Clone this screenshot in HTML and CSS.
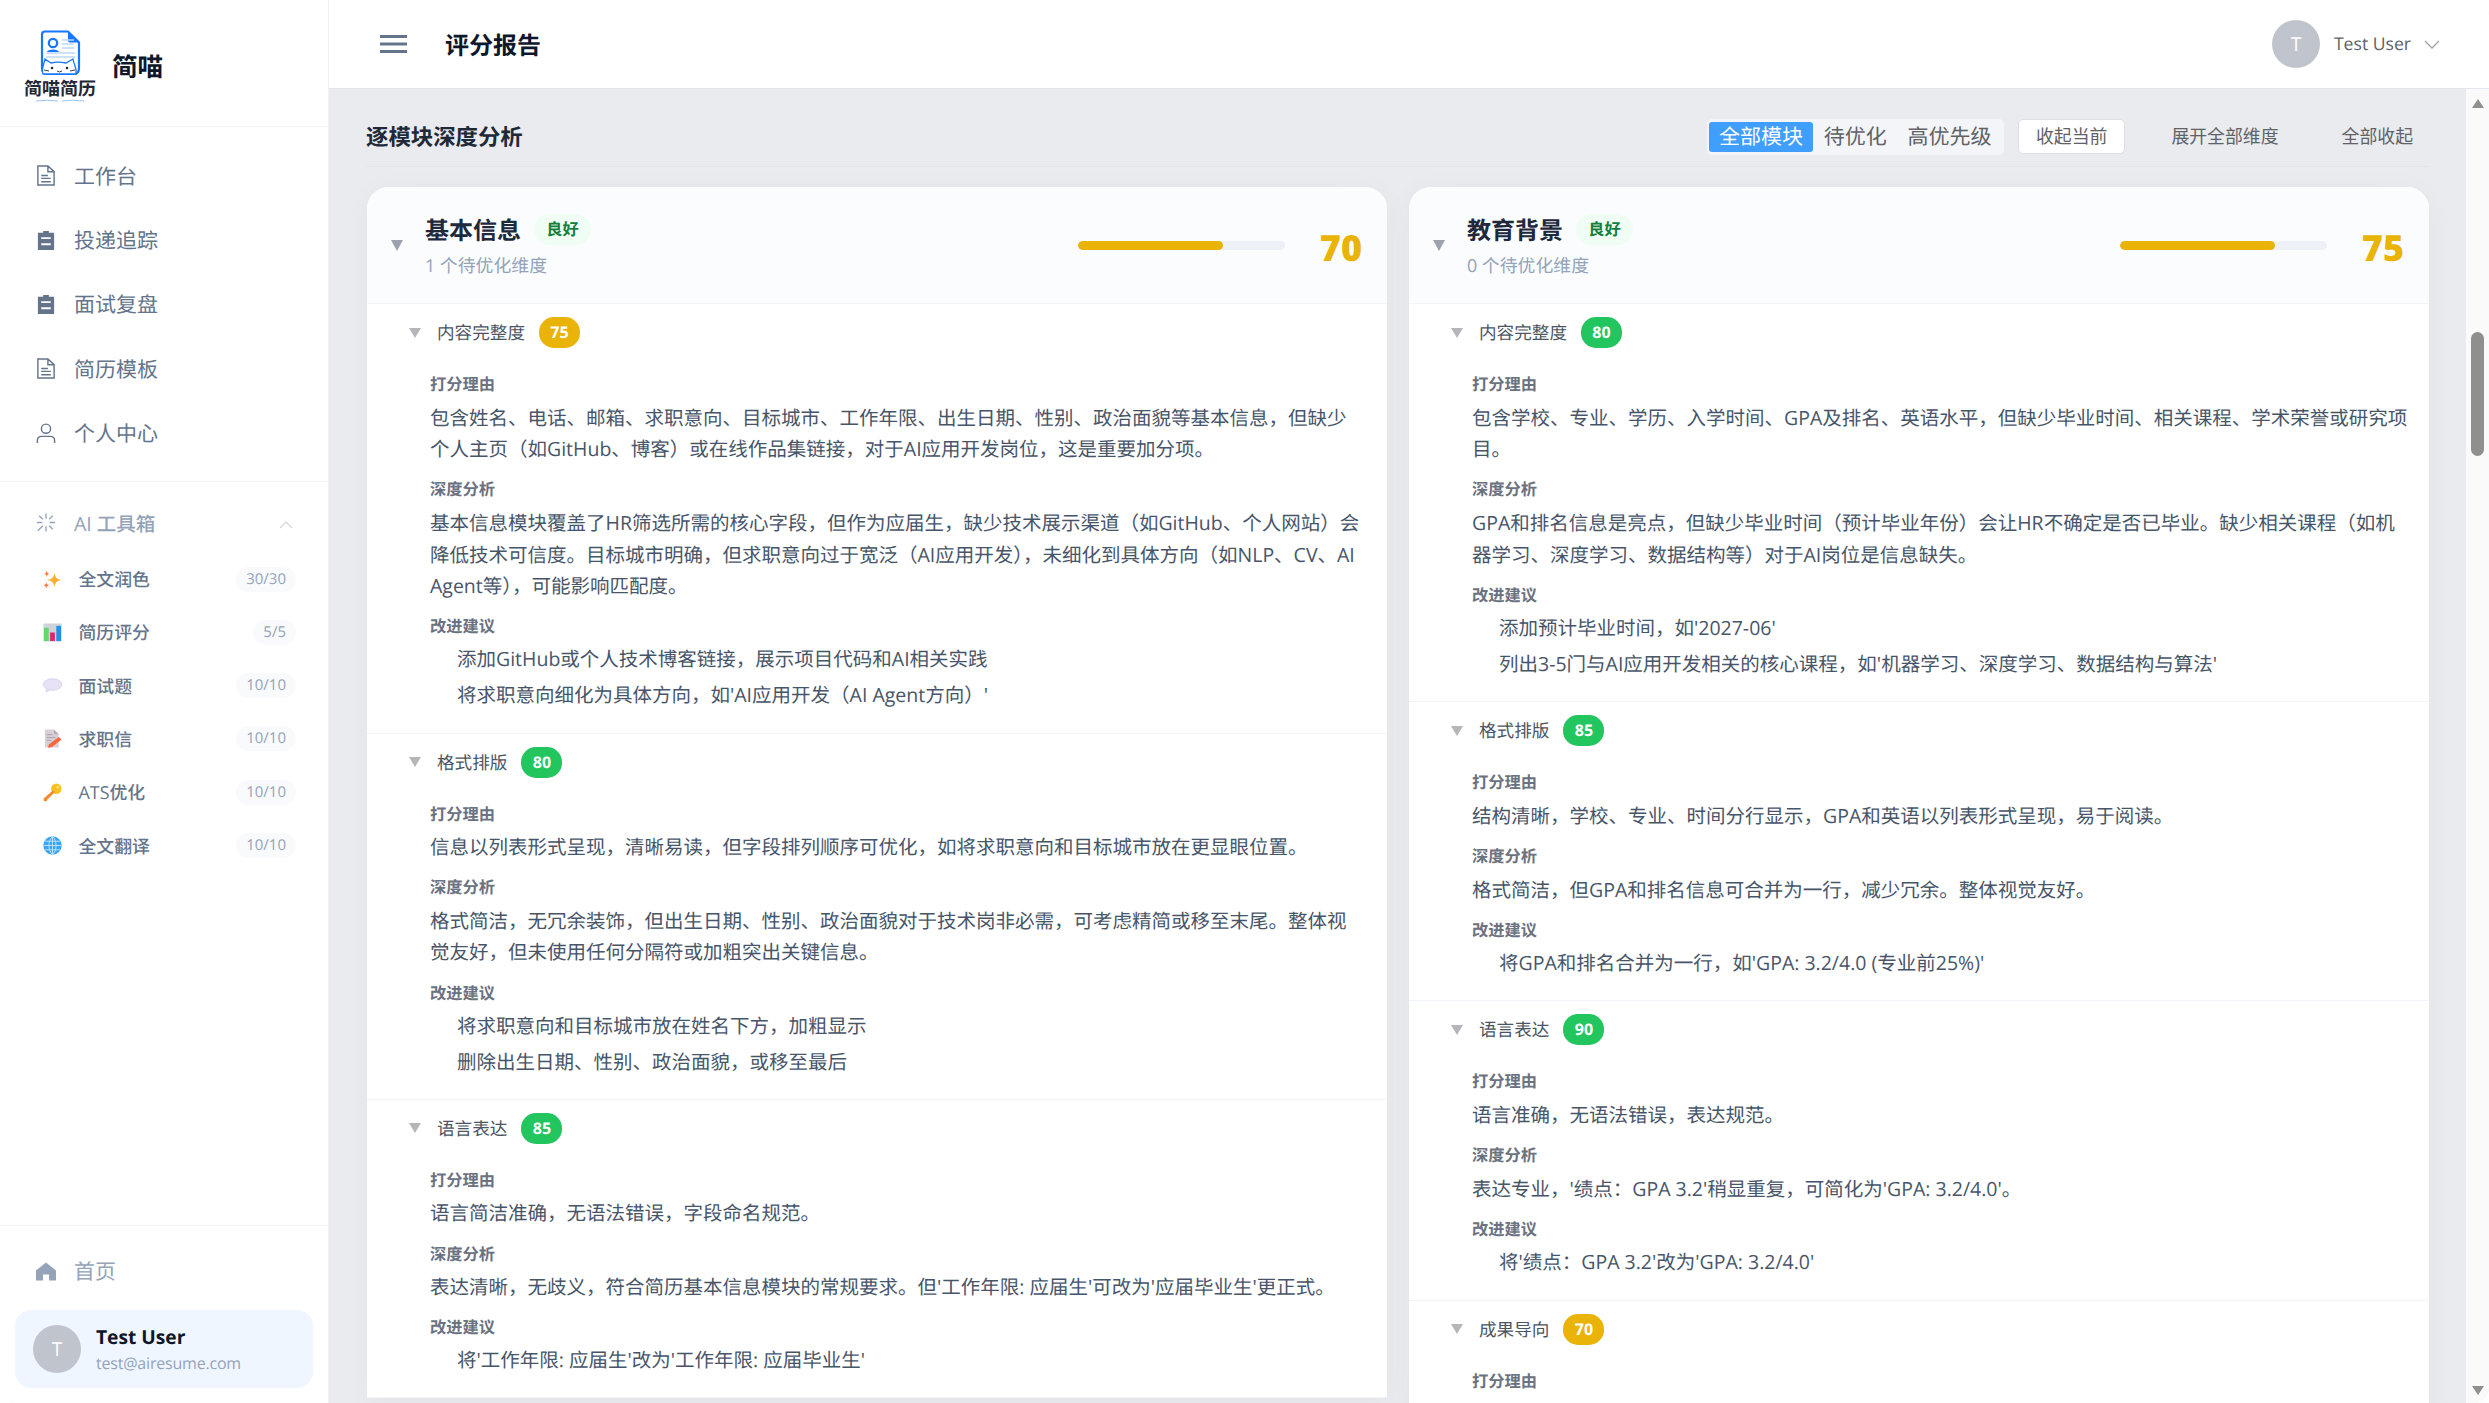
FILE: index.html
```html
<!DOCTYPE html>
<html lang="zh-CN">
<head>
    <meta charset="UTF-8">
    <title>评分报告 - 简喵</title>
    <link rel="stylesheet" href="styles.css">
</head>
<body>
<div class="app">

    <!-- Sidebar -->
    <aside class="sidebar">
        <div class="brand">
            <svg class="brand-logo" viewBox="0 0 72 72">
                <path d="M21 1.500H44L55 12.500V38C55 42 53 44 50 44H23C20 44 18 42 18 38V4.500C18 2.500 19 1.500 21 1.500Z" fill="#fff" stroke="#1677ff" stroke-width="2.200"/>
                <path d="M44 1.500L55 12.500H46C44.800 12.500 44 11.700 44 10.500Z" fill="#1677ff"/>
                <circle cx="29" cy="13" r="4.200" fill="none" stroke="#1677ff" stroke-width="2.200"/>
                <path d="M23 22C23.500 18.500 34.500 18.500 35 22" fill="#1677ff"/>
                <path d="M38 10H50M38 14H50M38 18H50M22 23H51M22 27H51" stroke="#bcd8fb" stroke-width="1.500"/>
                <path d="M19 44C17 38 20 35 21 29L27 33C31 32 37 32 42 33L49 29C50 35 53 38 52 44Z" fill="#fff" stroke="#1677ff" stroke-width="1.300"/>
                <circle cx="28" cy="38" r="1.300" fill="#1f2937"/>
                <circle cx="43" cy="38" r="1.300" fill="#1f2937"/>
                <path d="M33 41Q35.500 43 38 41M20 40L25 41M46 41L51 40" stroke="#1f2937" stroke-width="0.900" fill="none"/>
                <text class="brand-logo-text" x="36" y="65" text-anchor="middle">简喵简历</text>
                <path d="M12 71Q24 69.500 34 71M38 71Q48 69.500 60 71" stroke="#7db4f5" stroke-width="0.800" fill="none"/>
            </svg>
            <span class="brand-name">简喵</span>
        </div>

        <nav class="nav">
            <a class="nav-item">
                <svg class="nav-icon" viewBox="0 0 20 22"><path d="M1.500 1H12L18.500 7V21H1.500ZM12 1V7H18.500M5 11H12M5 14H15M5 17.500H15" fill="none" stroke="#64748b" stroke-width="1.500"/></svg>
                工作台
            </a>
            <a class="nav-item">
                <svg class="nav-icon" viewBox="0 0 20 22"><path d="M7 1H13V3H18.500V21H1.500V3H7Z" fill="#64748b"/><path d="M5 7.500H15V9.500H5ZM5 14H15V16H5Z" fill="#fff"/></svg>
                投递追踪
            </a>
            <a class="nav-item">
                <svg class="nav-icon" viewBox="0 0 20 22"><path d="M7 1H13V3H18.500V21H1.500V3H7Z" fill="#64748b"/><path d="M5 7.500H15V9.500H5ZM5 14H15V16H5Z" fill="#fff"/></svg>
                面试复盘
            </a>
            <a class="nav-item">
                <svg class="nav-icon" viewBox="0 0 20 22"><path d="M1.500 1H12L18.500 7V21H1.500ZM12 1V7H18.500M5 11H12M5 14H15M5 17.500H15" fill="none" stroke="#64748b" stroke-width="1.500"/></svg>
                简历模板
            </a>
            <a class="nav-item">
                <svg class="nav-icon" viewBox="0 0 20 22"><circle cx="10" cy="6" r="4.800" fill="none" stroke="#64748b" stroke-width="1.500"/><path d="M1 21V18C1 15.500 3 14 5.500 14H14.500C17 14 19 15.500 19 18V21" fill="none" stroke="#64748b" stroke-width="1.500"/></svg>
                个人中心
            </a>
        </nav>

        <div class="tools">
            <div class="tools-head">
                <svg class="nav-icon" viewBox="0 0 22 22"><path d="M11 1V7M11 15V21M1 11H7M15 11H21M3.500 3.500L7.500 7.500M14.500 14.500L18.500 18.500M18.500 3.500L14.500 7.500M7.500 14.500L2 20" stroke="#94a3b8" stroke-width="1.500" fill="none"/></svg>
                <span>AI 工具箱</span>
                <svg class="tools-chevron" viewBox="0 0 14 8"><path d="M1 7L7 1L13 7" fill="none" stroke="#d1d5db" stroke-width="1.200"/></svg>
            </div>

            <a class="tool">
                <svg class="tool-icon" viewBox="0 0 20 20"><path d="M12 3C13 8 14 9.500 19.500 10.500C14 11.500 13 13 12 18.500C11 13 10 11.500 4.500 10.500C10 9.500 11 8 12 3Z" fill="#fbb034"/><path d="M4 0.500C4.500 3 5 3.500 7 4C5 4.500 4.500 5 4 7.500C3.500 5 3 4.500 1 4C3 3.500 3.500 3 4 0.500ZM3.500 13C4 15 4.500 15.500 6.500 16C4.500 16.500 4 17 3.500 19.500C3 17 2.500 16.500 0.500 16C2.500 15.500 3 15 3.500 13Z" fill="#f9793c"/></svg>
                <span class="tool-name">全文润色</span><span class="tool-count">30/30</span>
            </a>
            <a class="tool">
                <svg class="tool-icon" viewBox="0 0 20 20"><rect x="0.500" y="0.500" width="19" height="19" rx="1" fill="#cfd2d8"/><rect x="1" y="5" width="5" height="14" fill="#62d96b"/><rect x="7.500" y="10" width="5" height="9" fill="#e0246f"/><rect x="14" y="3" width="5" height="16" fill="#2491e8"/></svg>
                <span class="tool-name">简历评分</span><span class="tool-count">5/5</span>
            </a>
            <a class="tool">
                <svg class="tool-icon" viewBox="0 0 20 20"><path d="M10 3C15.500 3 19.500 5.500 19.500 9C19.500 12.500 15.500 15 10 15C9 15 8 14.900 7 14.700C6 15.700 4.500 16.500 3 16.500C3.800 15.700 4.200 14.700 4.200 13.500C2 12.500 0.500 11 0.500 9C0.500 5.500 4.500 3 10 3Z" fill="#e8e2f6" stroke="#cfc6ea" stroke-width="0.800"/></svg>
                <span class="tool-name">面试题</span><span class="tool-count">10/10</span>
            </a>
            <a class="tool">
                <svg class="tool-icon" viewBox="0 0 20 20"><path d="M2 0.500H11.500L16.500 5.500V19.500H2Z" fill="#d8d0d8"/><path d="M11.500 0.500L16.500 5.500H11.500Z" fill="#b8adb8"/><path d="M4 6H10M4 9H13M4 12H9" stroke="#a99ea9" stroke-width="1"/><path d="M16.500 8.500L19.500 11L9.500 19L5 19.800L6.500 16Z" fill="#f4673a"/></svg>
                <span class="tool-name">求职信</span><span class="tool-count">10/10</span>
            </a>
            <a class="tool">
                <svg class="tool-icon" viewBox="0 0 20 20"><circle cx="14" cy="6" r="5.500" fill="#fbbf24"/><path d="M10.500 7.500L12.500 9.500L4.500 17.500L3.500 19.500L1 19L0.500 16.500Z" fill="#f58a2c"/><circle cx="15.500" cy="4.500" r="1.300" fill="#fde68a"/></svg>
                <span class="tool-name">ATS优化</span><span class="tool-count">10/10</span>
            </a>
            <a class="tool">
                <svg class="tool-icon" viewBox="0 0 20 20"><circle cx="10" cy="10" r="9.700" fill="#38a5f5"/><path d="M0.500 10H19.500M2 5.500H18M2 14.500H18M10 0.500V19.500M10 0.500C5 5 5 15 10 19.500M10 0.500C15 5 15 15 10 19.500" stroke="#cdeafe" stroke-width="0.900" fill="none"/></svg>
                <span class="tool-name">全文翻译</span><span class="tool-count">10/10</span>
            </a>
        </div>

        <div class="side-foot">
            <a class="home-link">
                <svg class="nav-icon" viewBox="0 0 20 20"><path d="M10 1L20 9V19H13V13H7V19H0V9Z" fill="#94a3b8"/></svg>
                首页
            </a>
            <div class="user-card">
                <div class="avatar">T</div>
                <div>
                    <div class="user-name">Test User</div>
                    <div class="user-mail">test@airesume.com</div>
                </div>
            </div>
        </div>
    </aside>

    <div class="right">
        <!-- Top bar -->
        <header class="topbar">
            <svg class="menu-icon" viewBox="0 0 27 18"><path d="M0 1.500H27M0 9H27M0 16.500H27" stroke="#64748b" stroke-width="3"/></svg>
            <h1 class="page-title">评分报告</h1>
            <div class="top-user">
                <div class="avatar">T</div>
                <span class="top-user-name">Test User</span>
                <svg class="top-chevron" viewBox="0 0 16 9"><path d="M1 1L8 8L15 1" fill="none" stroke="#9ca3af" stroke-width="1.300"/></svg>
            </div>
        </header>

        <div class="workspace">
            <main class="main">
                <div class="toolbar">
                    <h2 class="section-title">逐模块深度分析</h2>
                    <div class="filter">
                        <span class="filter-item active">全部模块</span>
                        <span class="filter-item">待优化</span>
                        <span class="filter-item">高优先级</span>
                    </div>
                    <button class="btn btn-plain">收起当前</button>
                    <button class="btn btn-text">展开全部维度</button>
                    <button class="btn btn-text">全部收起</button>
                </div>

                <div class="modules">
                    <!-- 基本信息 -->
                    <section class="module">
                        <div class="module-head">
                            <i class="tri"></i>
                            <div class="module-info">
                                <div class="module-title-row">
                                    <span class="module-title">基本信息</span>
                                    <span class="level">良好</span>
                                </div>
                                <div class="module-sub">1 个待优化维度</div>
                            </div>
                            <div class="bar"><div class="bar-fill" style="width: 70%"></div></div>
                            <div class="module-score">70</div>
                        </div>

                        <div class="dim">
                            <div class="dim-head"><i class="tri-small"></i><span class="dim-name">内容完整度</span><span class="score yellow">75</span></div>
                            <div class="dim-body">
                                <h4>打分理由</h4>
                                <p>包含姓名、电话、邮箱、求职意向、目标城市、工作年限、出生日期、性别、政治面貌等基本信息，但缺少个人主页（如GitHub、博客）或在线作品集链接，对于AI应用开发岗位，这是重要加分项。</p>
                                <h4>深度分析</h4>
                                <p>基本信息模块覆盖了HR筛选所需的核心字段，但作为应届生，缺少技术展示渠道（如GitHub、个人网站）会降低技术可信度。目标城市明确，但求职意向过于宽泛（AI应用开发），未细化到具体方向（如NLP、CV、AI Agent等），可能影响匹配度。</p>
                                <h4>改进建议</h4>
                                <ul>
                                    <li>添加GitHub或个人技术博客链接，展示项目代码和AI相关实践</li>
                                    <li>将求职意向细化为具体方向，如'AI应用开发（AI Agent方向）'</li>
                                </ul>
                            </div>
                        </div>

                        <div class="dim">
                            <div class="dim-head"><i class="tri-small"></i><span class="dim-name">格式排版</span><span class="score green">80</span></div>
                            <div class="dim-body">
                                <h4>打分理由</h4>
                                <p>信息以列表形式呈现，清晰易读，但字段排列顺序可优化，如将求职意向和目标城市放在更显眼位置。</p>
                                <h4>深度分析</h4>
                                <p>格式简洁，无冗余装饰，但出生日期、性别、政治面貌对于技术岗非必需，可考虑精简或移至末尾。整体视觉友好，但未使用任何分隔符或加粗突出关键信息。</p>
                                <h4>改进建议</h4>
                                <ul>
                                    <li>将求职意向和目标城市放在姓名下方，加粗显示</li>
                                    <li>删除出生日期、性别、政治面貌，或移至最后</li>
                                </ul>
                            </div>
                        </div>

                        <div class="dim">
                            <div class="dim-head"><i class="tri-small"></i><span class="dim-name">语言表达</span><span class="score green">85</span></div>
                            <div class="dim-body">
                                <h4>打分理由</h4>
                                <p>语言简洁准确，无语法错误，字段命名规范。</p>
                                <h4>深度分析</h4>
                                <p>表达清晰，无歧义，符合简历基本信息模块的常规要求。但'工作年限: 应届生'可改为'应届毕业生'更正式。</p>
                                <h4>改进建议</h4>
                                <ul>
                                    <li>将'工作年限: 应届生'改为'工作年限: 应届毕业生'</li>
                                </ul>
                            </div>
                        </div>
                    </section>

                    <!-- 教育背景 -->
                    <section class="module">
                        <div class="module-head">
                            <i class="tri"></i>
                            <div class="module-info">
                                <div class="module-title-row">
                                    <span class="module-title">教育背景</span>
                                    <span class="level">良好</span>
                                </div>
                                <div class="module-sub">0 个待优化维度</div>
                            </div>
                            <div class="bar"><div class="bar-fill" style="width: 75%"></div></div>
                            <div class="module-score">75</div>
                        </div>

                        <div class="dim">
                            <div class="dim-head"><i class="tri-small"></i><span class="dim-name">内容完整度</span><span class="score green">80</span></div>
                            <div class="dim-body">
                                <h4>打分理由</h4>
                                <p>包含学校、专业、学历、入学时间、GPA及排名、英语水平，但缺少毕业时间、相关课程、学术荣誉或研究项目。</p>
                                <h4>深度分析</h4>
                                <p>GPA和排名信息是亮点，但缺少毕业时间（预计毕业年份）会让HR不确定是否已毕业。缺少相关课程（如机器学习、深度学习、数据结构等）对于AI岗位是信息缺失。</p>
                                <h4>改进建议</h4>
                                <ul>
                                    <li>添加预计毕业时间，如'2027-06'</li>
                                    <li>列出3-5门与AI应用开发相关的核心课程，如'机器学习、深度学习、数据结构与算法'</li>
                                </ul>
                            </div>
                        </div>

                        <div class="dim">
                            <div class="dim-head"><i class="tri-small"></i><span class="dim-name">格式排版</span><span class="score green">85</span></div>
                            <div class="dim-body">
                                <h4>打分理由</h4>
                                <p>结构清晰，学校、专业、时间分行显示，GPA和英语以列表形式呈现，易于阅读。</p>
                                <h4>深度分析</h4>
                                <p>格式简洁，但GPA和排名信息可合并为一行，减少冗余。整体视觉友好。</p>
                                <h4>改进建议</h4>
                                <ul>
                                    <li>将GPA和排名合并为一行，如'GPA: 3.2/4.0 (专业前25%)'</li>
                                </ul>
                            </div>
                        </div>

                        <div class="dim">
                            <div class="dim-head"><i class="tri-small"></i><span class="dim-name">语言表达</span><span class="score green">90</span></div>
                            <div class="dim-body">
                                <h4>打分理由</h4>
                                <p>语言准确，无语法错误，表达规范。</p>
                                <h4>深度分析</h4>
                                <p>表达专业，'绩点：GPA 3.2'稍显重复，可简化为'GPA: 3.2/4.0'。</p>
                                <h4>改进建议</h4>
                                <ul>
                                    <li>将'绩点：GPA 3.2'改为'GPA: 3.2/4.0'</li>
                                </ul>
                            </div>
                        </div>

                        <div class="dim">
                            <div class="dim-head"><i class="tri-small"></i><span class="dim-name">成果导向</span><span class="score yellow">70</span></div>
                            <div class="dim-body">
                                <h4>打分理由</h4>
                            </div>
                        </div>
                    </section>
                </div>
            </main>

            <div class="scrollbar">
                <i class="arrow-up"></i>
                <div class="thumb"></div>
                <i class="arrow-down"></i>
            </div>
        </div>
    </div>
</div>
</body>
</html>
```

FILE: styles.css
```css
* {
    box-sizing: border-box;
}

html, body {
    margin: 0;
    height: 100%;
    overflow: hidden;
    background-color: #fff;
}

body {
    font-family: "Open Sans", "Noto Sans CJK SC", sans-serif;
    text-rendering: geometricPrecision;
}

.app {
    display: flex;
    height: 1403px;
    border-radius: 16px;
    overflow: hidden;
    box-shadow: inset 0 0 0 1px #eceef1;
}

/* Sidebar */
.sidebar {
    display: flex;
    flex-direction: column;
    flex: none;
    width: 329px;
    background-color: #fff;
    border-right: 1px solid #eef0f3;
}

.brand {
    display: flex;
    align-items: center;
    gap: 16px;
    flex: none;
    height: 127px;
    padding: 0 0 0 24px;
    border-bottom: 1px solid #f1f5f9;
}

.brand-logo {
    width: 72px;
    height: 72px;
    margin-top: 6px;
}

.brand-logo-text {
    font-family: "Noto Sans CJK SC", sans-serif;
    font-size: 18px;
    font-weight: 600;
    fill: #1f2937;
}

.brand-name {
    font-size: 25.600px;
    line-height: 32px;
    font-weight: 700;
    color: #0f172a;
    margin-top: 8px;
}

.nav {
    flex: none;
    padding: 16.500px 0 15.500px;
    border-bottom: 1px solid #f1f5f9;
}

.nav-item {
    display: flex;
    align-items: center;
    gap: 18px;
    height: 64.400px;
    padding-left: 36px;
    font-size: 21px;
    color: #64748b;
}

.nav-icon {
    flex: none;
    width: 20px;
    height: 21px;
}

.tools {
    flex: none;
    padding-top: 21px;
}

.tools-head {
    display: flex;
    align-items: center;
    gap: 18px;
    height: 40px;
    padding-left: 36px;
    font-size: 19.500px;
    font-weight: 500;
    color: #94a3b8;
}

.tools-chevron {
    width: 14px;
    height: 8px;
    margin-left: auto;
    margin-right: 35px;
    margin-top: 4px;
}

.tool {
    display: flex;
    align-items: center;
    gap: 16.500px;
    height: 53.300px;
    padding: 0 32px 0 43px;
    font-size: 17.875px;
    font-weight: 500;
    color: #64748b;
}

.tools-head + .tool {
    margin-top: 9.500px;
}

.tool-icon {
    flex: none;
    width: 19px;
    height: 19px;
}

.tool-count {
    margin-left: auto;
    height: 25px;
    padding: 0 10px;
    border-radius: 13px;
    background-color: #f8fafc;
    font-size: 15px;
    line-height: 25px;
    font-weight: 400;
    color: #94a3b8;
}

.side-foot {
    margin-top: auto;
    padding: 25px 15px 15px;
    border-top: 1px solid #f1f5f9;
}

.home-link {
    display: flex;
    align-items: center;
    gap: 18px;
    height: 40px;
    padding-left: 21px;
    margin-bottom: 19px;
    font-size: 21px;
    color: #94a3b8;
}

.user-card {
    display: flex;
    align-items: center;
    gap: 15px;
    height: 78px;
    padding-left: 18px;
    border-radius: 16px;
    background-color: #eff6ff;
}

.avatar {
    flex: none;
    width: 48px;
    height: 48px;
    border-radius: 50%;
    background-color: #c0c4cc;
    color: #fff;
    font-size: 19.200px;
    line-height: 48px;
    text-align: center;
}

.user-name {
    font-size: 19.200px;
    line-height: 26px;
    font-weight: 700;
    color: #0f172a;
}

.user-mail {
    font-size: 16px;
    line-height: 24px;
    margin-top: 1px;
    letter-spacing: -0.200px;
    color: #94a3b8;
}

/* Right side */
.right {
    display: flex;
    flex-direction: column;
    flex: 1;
    min-width: 0;
}

.topbar {
    display: flex;
    align-items: center;
    flex: none;
    height: 89px;
    padding: 0 49px 0 51px;
    background-color: #fff;
    border-bottom: 1px solid #e2e5ea;
}

.menu-icon {
    width: 27px;
    height: 18px;
    margin-right: 38px;
}

.page-title {
    margin: 4px 0 0;
    font-size: 24px;
    line-height: 32px;
    font-weight: 600;
    color: #0f172a;
}

.top-user {
    display: flex;
    align-items: center;
    margin-left: auto;
}

.top-user-name {
    margin-left: 14px;
    font-size: 17.600px;
    color: #606266;
}

.top-chevron {
    width: 16px;
    height: 9px;
    margin-left: 13px;
}

.workspace {
    display: flex;
    flex: 1;
    min-height: 0;
}

.main {
    flex: 1;
    min-width: 0;
    padding: 0 36px 0 37px;
    overflow: hidden;
    background-color: #e9ebef;
}

.toolbar {
    display: flex;
    align-items: center;
    height: 78px;
    padding-top: 18px;
    border-bottom: 1px solid #e3e5e9;
    margin-bottom: 20px;
}

.section-title {
    margin: 0 auto 0 0;
    font-size: 22.400px;
    line-height: 30px;
    font-weight: 600;
    color: #1f2937;
}

.filter {
    display: flex;
    height: 36px;
    padding: 3px 2px;
    border-radius: 5px;
    background-color: #f4f5f8;
    margin-right: 14px;
}

.filter-item {
    padding: 0 10.400px;
    font-size: 21px;
    line-height: 30px;
    color: #606266;
}

.filter-item.active {
    background-color: #409eff;
    color: #fff;
    border-radius: 3px;
}

.btn {
    height: 35px;
    padding: 0 17px;
    font-family: inherit;
    font-size: 17.875px;
    line-height: 1;
    color: #606266;
    border-radius: 5px;
    border: 1px solid transparent;
    background: none;
}

.btn-plain {
    background-color: #fff;
    border-color: #dcdfe6;
}

.btn-text {
    margin-left: 29px;
    padding: 0 16px;
}

.modules {
    display: grid;
    grid-template-columns: repeat(2, 1fr);
    gap: 22px;
    padding: 0 1px;
    align-items: start;
}

.module {
    border-radius: 22px 22px 0 0;
    background-color: #fff;
    box-shadow: 0 4px 30px rgba(0, 0, 0, 0.035);
    overflow: hidden;
}

.module-head {
    display: flex;
    align-items: center;
    height: 117px;
    padding: 0 25px 0 24px;
    background-color: #fbfcfe;
    border-bottom: 1px solid #f1f5f9;
}

.tri {
    flex: none;
    width: 0;
    height: 0;
    margin-right: 22px;
    border-left: 6px solid transparent;
    border-right: 6px solid transparent;
    border-top: 11px solid #9ca3af;
}

.module-info {
    margin-top: 3px;
}

.module-title-row {
    display: flex;
    align-items: center;
    gap: 13px;
    height: 31px;
}

.module-title {
    margin-top: 2px;
    font-size: 24px;
    line-height: 31px;
    font-weight: 700;
    color: #1e293b;
}

.level {
    width: 57px;
    height: 31px;
    border-radius: 16px;
    background-color: #f0fdf4;
    font-size: 16.250px;
    line-height: 31px;
    font-weight: 700;
    color: #15803d;
    text-align: center;
}

.module-sub {
    margin-top: 8px;
    font-size: 17.875px;
    line-height: 26px;
    color: #94a3b8;
}

.bar {
    flex: none;
    width: 207px;
    height: 9px;
    margin-left: auto;
    border-radius: 5px;
    background-color: #edf0f6;
    overflow: hidden;
}

.bar-fill {
    height: 100%;
    border-radius: 5px;
    background-color: #eab308;
}

.module-score {
    flex: none;
    margin-left: 35px;
    margin-top: 6px;
    font-size: 36px;
    line-height: 40px;
    font-weight: 800;
    color: #eab308;
}

.dim {
    padding: 13px 22px 21.500px 0;
    border-bottom: 1px solid #f1f5f9;
}

.module + .module .dim {
    padding-right: 20px;
    padding-bottom: 22px;
}

.dim-head {
    display: flex;
    align-items: center;
    height: 31px;
    padding-left: 42px;
}

.tri-small {
    flex: none;
    width: 0;
    height: 0;
    margin-right: 16px;
    border-left: 6px solid transparent;
    border-right: 6px solid transparent;
    border-top: 10px solid #b4b6ba;
}

.dim-name {
    font-size: 17.600px;
    color: #4b5563;
    margin-right: 14px;
}

.score {
    width: 41px;
    height: 31px;
    border-radius: 15px;
    color: #fff;
    font-size: 16px;
    line-height: 31px;
    font-weight: 700;
    text-align: center;
}

.yellow {
    background-color: #eab308;
}

.green {
    background-color: #22c55e;
}

.dim-body {
    margin-left: 63px;
    padding-top: 23px;
}

.dim-body h4 {
    margin: 0 0 4.500px;
    font-size: 16.250px;
    line-height: 26px;
    font-weight: 600;
    color: #6b7280;
}

.dim-body p {
    margin: 0 0 11.500px;
    font-size: 19.500px;
    line-height: 31.680px;
    color: #475569;
}

.dim-body ul {
    margin: -0.500px 0 0;
    padding: 0 0 0 27px;
    list-style: none;
}

.dim-body li {
    font-size: 19.500px;
    line-height: 31.680px;
    color: #475569;
}

.dim-body li + li {
    margin-top: 4.300px;
}

/* Scrollbar */
.scrollbar {
    display: flex;
    flex-direction: column;
    align-items: center;
    flex: none;
    width: 23px;
    padding: 10px 0 8px;
    background-color: #fafafa;
}

.arrow-up {
    width: 0;
    height: 0;
    border-left: 6px solid transparent;
    border-right: 6px solid transparent;
    border-bottom: 9px solid #8f8f8f;
}

.arrow-down {
    width: 0;
    height: 0;
    margin-top: auto;
    border-left: 6px solid transparent;
    border-right: 6px solid transparent;
    border-top: 9px solid #8f8f8f;
}

.thumb {
    width: 13px;
    height: 124px;
    margin-top: 224px;
    border-radius: 7px;
    background-color: #8f8f8f;
}
```
